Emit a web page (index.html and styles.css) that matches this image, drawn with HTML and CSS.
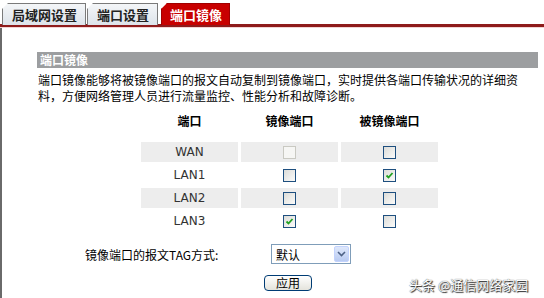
FILE: index.html
```html
<!DOCTYPE html>
<html lang="zh-CN">
<head>
<meta charset="UTF-8">
<title>端口镜像</title>
<link rel="stylesheet" href="styles.css">
</head>
<body>
<div class="tabs">
  <div class="tab">局域网设置</div>
  <div class="tab">端口设置</div>
  <div class="tab active">端口镜像</div>
</div>
<div class="tabline"></div>

<div class="panel">
  <div class="bar">端口镜像</div>
  <p class="desc">端口镜像能够将被镜像端口的报文自动复制到镜像端口，实时提供各端口传输状况的详细资料，方便网络管理人员进行流量监控、性能分析和故障诊断。</p>

  <table class="ports">
    <tr class="head"><th>端口</th><th>镜像端口</th><th>被镜像端口</th></tr>
    <tr class="odd"><td>WAN</td><td><span class="cb off"></span></td><td><span class="cb"></span></td></tr>
    <tr><td>LAN1</td><td><span class="cb"></span></td><td><span class="cb on"><svg viewBox="0 0 11 11" width="11" height="11"><path d="M2.5 5.5 L4.5 7.5 L8.5 3" fill="none" stroke="#21a121" stroke-width="1.8"/></svg></span></td></tr>
    <tr class="odd"><td>LAN2</td><td><span class="cb"></span></td><td><span class="cb"></span></td></tr>
    <tr><td>LAN3</td><td><span class="cb on"><svg viewBox="0 0 11 11" width="11" height="11"><path d="M2.5 5.5 L4.5 7.5 L8.5 3" fill="none" stroke="#21a121" stroke-width="1.8"/></svg></span></td><td><span class="cb"></span></td></tr>
  </table>

  <div class="tagrow">
    <span class="label">镜像端口的报文TAG方式:</span>
    <div class="select">
      <span class="val">默认</span>
      <span class="arrow"><svg viewBox="0 0 9 6" width="9" height="6"><path d="M1 1 L4.5 4.5 L8 1" fill="none" stroke="#4d6185" stroke-width="1.6"/></svg></span>
    </div>
  </div>
  <div class="btnrow"><button class="apply">应用</button></div>
</div>

<div class="mark">头条 @通信网络家园</div>
</body>
</html>
```

FILE: styles.css
```css
body{margin:0;background:#fff;font-family:"Noto Sans CJK SC","Liberation Sans",sans-serif;font-size:12px;color:#000;width:544px;height:298px;overflow:hidden;position:relative;}

/* tabs */
.tabs{display:flex;gap:1px;padding:3px 0 0 2px;height:21px;}
.tab{height:21px;line-height:21px;padding:0 8px 0 9px;font-size:13px;font-weight:bold;color:#222;
  background:linear-gradient(#f4f6f8,#dde3ea);border:1px solid #7a7a7a;border-bottom:none;
  clip-path:polygon(6px 0,100% 0,100% 100%,0 100%,0 6px);}
.tab.active{background:#c80000;color:#fff;border-color:#a00000;margin-left:2px;padding:0 7px 0 8px;}
.tabline{height:3px;background:#8e1b1b;border-bottom:1px solid #f3d4d4;}

.panel{box-sizing:border-box;border-left:2px solid #6a6a6a;height:270px;padding:24px 0 0 35px;}
.bar{width:498px;height:16px;line-height:16px;background:#9c9ea0;color:#fff;font-weight:bold;padding-left:3px;}
.desc{margin:4px 0 0 1px;width:486px;line-height:16px;}

/* ports table */
.ports{margin:3px 0 0 101px;border-collapse:separate;border-spacing:3px;}
.ports th,.ports td{width:97px;height:20px;padding:0;text-align:center;vertical-align:middle;}
.ports th{font-weight:bold;height:27px;vertical-align:top;padding-top:2px;}
.ports td{color:#333;font-family:"DejaVu Sans","Liberation Sans",sans-serif;font-size:12px;}
.ports tr.odd td{background:#ededed;}
.cb{display:inline-block;width:11px;height:11px;border:1px solid #1e4f7f;vertical-align:middle;
  background:linear-gradient(135deg,#dcdcd8,#fbfbfa);}
.cb svg{display:block;}
.cb.off{border-color:#c9c9c2;background:#f6f6f4;}

/* tag row */
.tagrow{display:flex;align-items:center;margin:10px 0 0 48px;}
.label{width:186px;font-size:12px;}
.select{display:flex;align-items:center;justify-content:space-between;width:78px;height:18px;border:1px solid #7f9db9;background:#fff;}
.val{padding-left:4px;}
.arrow{display:flex;align-items:center;justify-content:center;width:15px;height:16px;margin-right:1px;
  background:linear-gradient(#dfe8fb,#b9cbf2);border:1px solid #c3d3fd;box-sizing:border-box;border-radius:2px;}
.btnrow{margin:10px 0 0 227px;}
.apply{width:48px;height:16px;padding:0;font-family:"Noto Sans CJK SC",sans-serif;font-size:12px;line-height:14px;
  border:1px solid #003c74;border-radius:4px;background:linear-gradient(#fff,#e4e3dc);color:#000;}

.mark{position:absolute;left:409px;top:275px;font-size:13px;color:#fff;
  text-shadow:0 0 1px #222,1px 1px 1px #222;}
```
